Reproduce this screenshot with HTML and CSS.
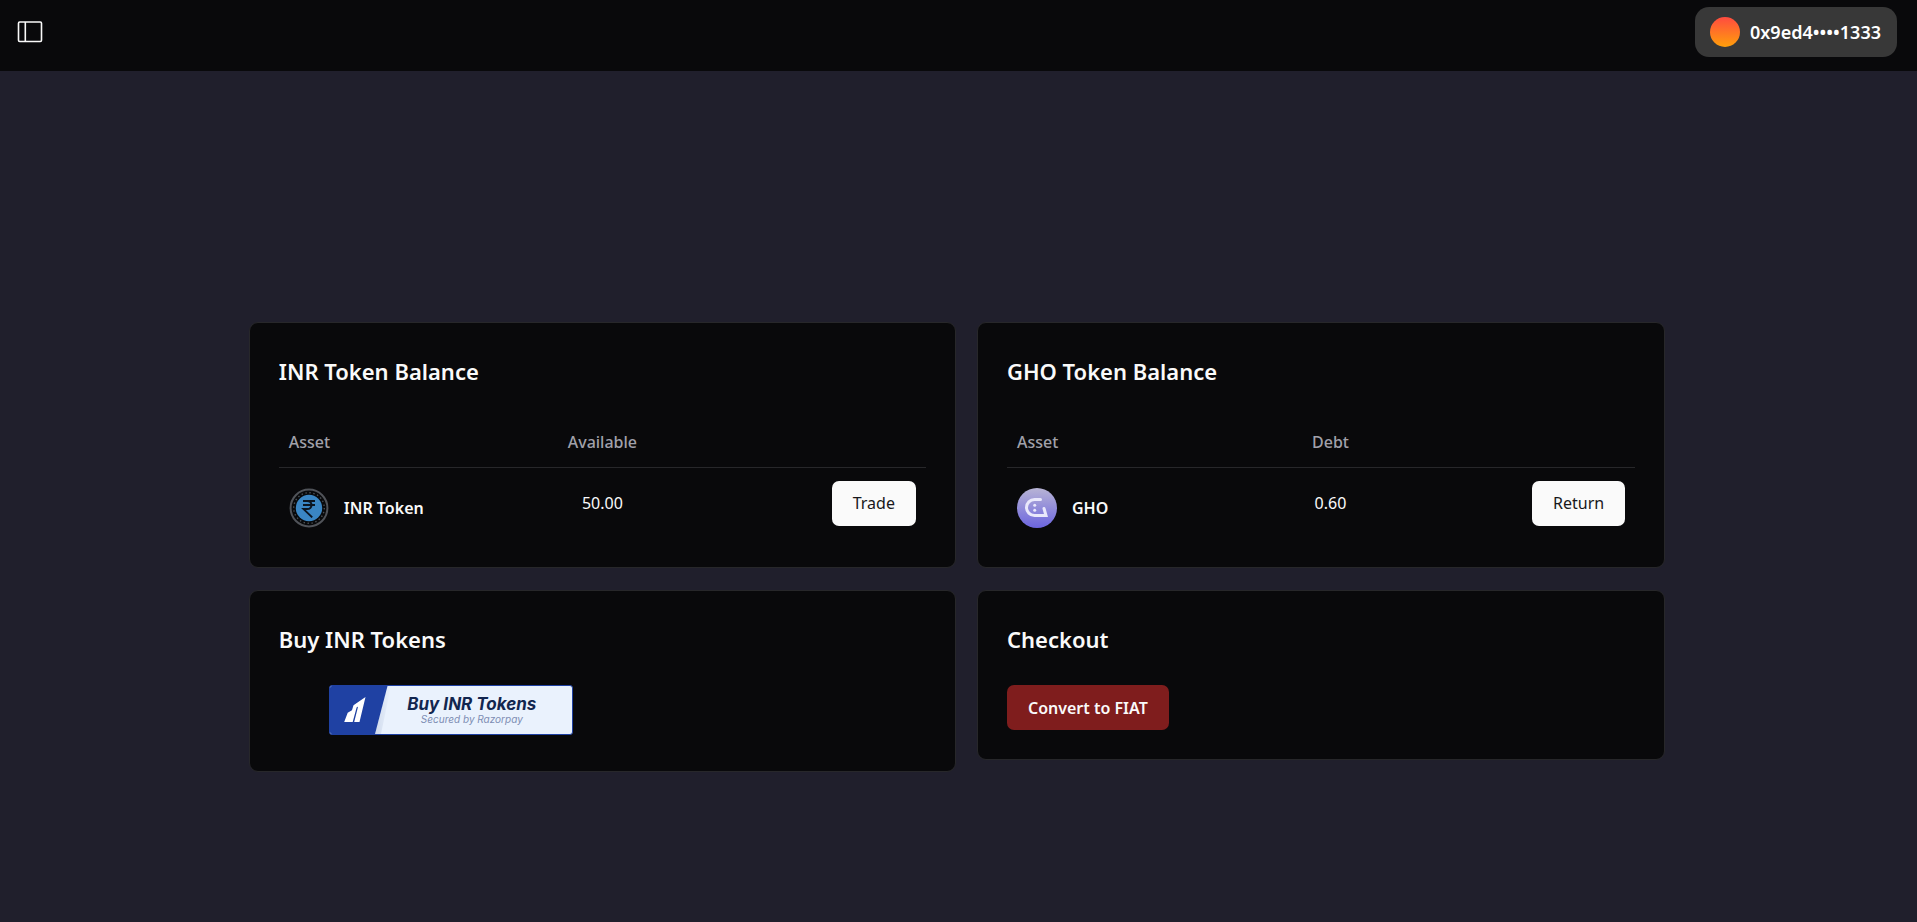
FILE: index.html
```html
<!DOCTYPE html>
<html lang="en">
<head>
<meta charset="utf-8">
<meta name="viewport" content="width=device-width, initial-scale=1">
<title>Token balances</title>
<link rel="stylesheet" href="styles.css">
</head>
<body>
<header class="topbar">
  <button class="sidebar-toggle" type="button" aria-label="Toggle sidebar">
    <svg width="26" height="22" viewBox="0 0 26 22" fill="none" stroke="currentColor" stroke-width="1.6" aria-hidden="true">
      <rect x="1.5" y="1" width="23" height="19.5" rx="1.2"/>
      <path d="M8.3 1v19.5"/>
    </svg>
  </button>
  <button class="account" type="button">
    <span class="avatar"></span>
    <span>0x9ed4••••1333</span>
  </button>
</header>
<main class="page">
  <div class="cards">
    <section class="card">
      <h2 class="card-title">INR Token Balance</h2>
      <table class="assets">
        <colgroup><col class="col-asset"><col class="col-amount"><col class="col-action"></colgroup>
        <thead>
          <tr><th class="left">Asset</th><th>Available</th><th></th></tr>
        </thead>
        <tbody>
          <tr>
            <td class="asset-cell">
              <div class="asset">
                <svg width="40" height="40" viewBox="0 0 40 40" aria-hidden="true">
                  <circle cx="20" cy="20" r="18.4" fill="#08090b" stroke="#505359" stroke-width="2"/>
                  <circle cx="20" cy="20" r="15.3" fill="none" stroke="#4c5157" stroke-width="1.4" stroke-dasharray="1.4 2.6"/>
                  <circle cx="20" cy="20" r="13.2" fill="#3a86c4"/>
                  <path d="M14 12.9h12M14 17h12M14 12.9h4.2c5.7 0 5.7 8.2 0 8.2H14.6l8.600 8.300" fill="none" stroke="#0b1521" stroke-width="2"/>
                </svg>
                <span>INR Token</span>
              </div>
            </td>
            <td>50.00</td>
            <td class="action"><button class="btn btn-light" type="button">Trade</button></td>
          </tr>
        </tbody>
      </table>
    </section>
    <section class="card">
      <h2 class="card-title">GHO Token Balance</h2>
      <table class="assets debts">
        <colgroup><col class="col-asset"><col class="col-amount"><col class="col-action"></colgroup>
        <thead>
          <tr><th class="left">Asset</th><th>Debt</th><th></th></tr>
        </thead>
        <tbody>
          <tr>
            <td class="asset-cell">
              <div class="asset">
                <svg width="40" height="40" viewBox="0 0 40 40" aria-hidden="true">
                  <defs>
                    <linearGradient id="gho" x1="0" y1="0" x2="0" y2="1">
                      <stop offset="0" stop-color="#b8b4d5"/>
                      <stop offset="1" stop-color="#6c65df"/>
                    </linearGradient>
                  </defs>
                  <circle cx="20" cy="20" r="20" fill="url(#gho)"/>
                  <path d="M23.500 11.500H17.500a8 8 0 0 0 0 16H29L27 20.500" fill="none" stroke="#e9e8fb" stroke-width="3" stroke-linecap="round" stroke-linejoin="miter"/>
                  <g fill="#e9e8fb"><circle cx="17.700" cy="17.300" r="1.500"/><circle cx="17.700" cy="22.300" r="1.500"/></g>
                </svg>
                <span>GHO</span>
              </div>
            </td>
            <td>0.60</td>
            <td class="action"><button class="btn btn-light" type="button">Return</button></td>
          </tr>
        </tbody>
      </table>
    </section>
    <section class="card">
      <h2 class="card-title">Buy INR Tokens</h2>
      <form class="payment">
        <button class="pay" type="button">
          <svg class="pay-mark" width="66" height="48" viewBox="0 0 66 48" aria-hidden="true">
            <defs>
              <linearGradient id="shade" x1="0" y1="0" x2="1" y2="0">
                <stop offset="0" stop-color="#cfdaec"/>
                <stop offset="1" stop-color="#eaf2fd"/>
              </linearGradient>
            </defs>
            <path d="M57.500 0H61L51 48H45z" fill="url(#shade)"/>
            <path d="M0 0H57.500L45 48H0z" fill="#1f41a3"/>
            <path d="M35.500 11 29.500 36H24.200L28.100 20.500 21.800 24.700 23.500 19.200zM17.700 26.800 26.600 21.600 22.700 36H14.200z" fill="#fff"/>
          </svg>
          <span class="pay-text">
            <span class="pay-label">Buy INR Tokens</span>
            <span class="pay-note">Secured by Razorpay</span>
          </span>
        </button>
      </form>
    </section>
    <section class="card">
      <h2 class="card-title">Checkout</h2>
      <button class="btn btn-danger" type="button">Convert to FIAT</button>
    </section>
  </div>
</main>
</body>
</html>
```
FILE: styles.css
```css
* { box-sizing: border-box; }

body {
  margin: 0;
  min-height: 100vh;
  display: flex;
  flex-direction: column;
  background: #201f2c;
  color: #fafafa;
  font-family: "Noto Sans", "Open Sans", sans-serif;
  font-size: 16px;
  line-height: 24px;
}

button {
  font: inherit;
  border: 0;
  cursor: pointer;
}

.topbar {
  display: flex;
  justify-content: space-between;
  align-items: flex-start;
  height: 71px;
  padding: 7px 20px 0 17px;
  background: #09090b;
}

.sidebar-toggle {
  display: flex;
  align-items: center;
  height: 50px;
  padding: 0;
  background: none;
  color: #fafafa;
}

.account {
  display: flex;
  align-items: center;
  gap: 10px;
  height: 50px;
  padding: 0 16px 0 15px;
  border-radius: 14px;
  background: #383838;
  color: #fff;
  font-size: 18px;
  font-weight: 600;
}

.avatar {
  width: 30px;
  height: 30px;
  border-radius: 50%;
  background: linear-gradient(#ff4b40, #ff9f0a);
}

.page {
  flex: 1;
  display: flex;
  align-items: center;
  justify-content: center;
  padding: 101px 3px 0 0;
}

.cards {
  display: grid;
  grid-template-columns: 708fr 689fr;
  align-items: start;
  gap: 22px 21px;
  width: 74%;
}

.card {
  padding: 29px;
  border: 1px solid #27272a;
  border-radius: 9px;
  background: #09090b;
}

.card-title {
  margin: 0 0 27px;
  font-size: 22px;
  line-height: 38px;
  font-weight: 600;
}

.assets {
  width: 100%;
  margin-top: -4px;
  table-layout: fixed;
  border-collapse: collapse;
}

.col-asset { width: 35%; }
.col-amount { width: 30%; }
.col-action { width: 35%; }
.debts .col-asset { width: 36%; }
.debts .col-amount { width: 31%; }
.debts .col-action { width: 33%; }

.assets th {
  height: 55px;
  padding: 4px 10px 0;
  border-bottom: 1px solid #27272a;
  color: #a1a1aa;
  font-weight: 500;
  text-align: center;
}

.assets .left { text-align: left; }

.assets td {
  padding: 10px;
  text-align: center;
}

.assets .asset-cell { padding-top: 20px; }
.assets .action { text-align: right; }

.asset {
  display: flex;
  align-items: center;
  gap: 15px;
  font-weight: 600;
}

.btn {
  height: 45px;
  padding: 0 21px;
  border-radius: 7px;
  vertical-align: middle;
}

.btn-light {
  background: #fafafa;
  color: #18181b;
}

.btn-danger {
  background: #7f1d1d;
  color: #fafafa;
  font-weight: 600;
}

.payment {
  padding: 0 50px 7px;
}

.pay {
  display: flex;
  width: 244px;
  height: 50px;
  padding: 0;
  overflow: hidden;
  border: 1px solid #1f41a3;
  border-radius: 3px;
  background: #eaf2fd;
  font-family: Inter, sans-serif;
  font-style: italic;
}

.pay-mark { flex: none; }

.pay-text {
  display: flex;
  flex: 1;
  flex-direction: column;
  align-items: center;
  padding: 9px 24px 0 0;
}

.pay-label {
  color: #12264f;
  font-size: 17px;
  line-height: 18px;
  font-weight: 700;
  white-space: nowrap;
}

.pay-note {
  color: #7d8db3;
  font-size: 10px;
  line-height: 12px;
  white-space: nowrap;
}
```
